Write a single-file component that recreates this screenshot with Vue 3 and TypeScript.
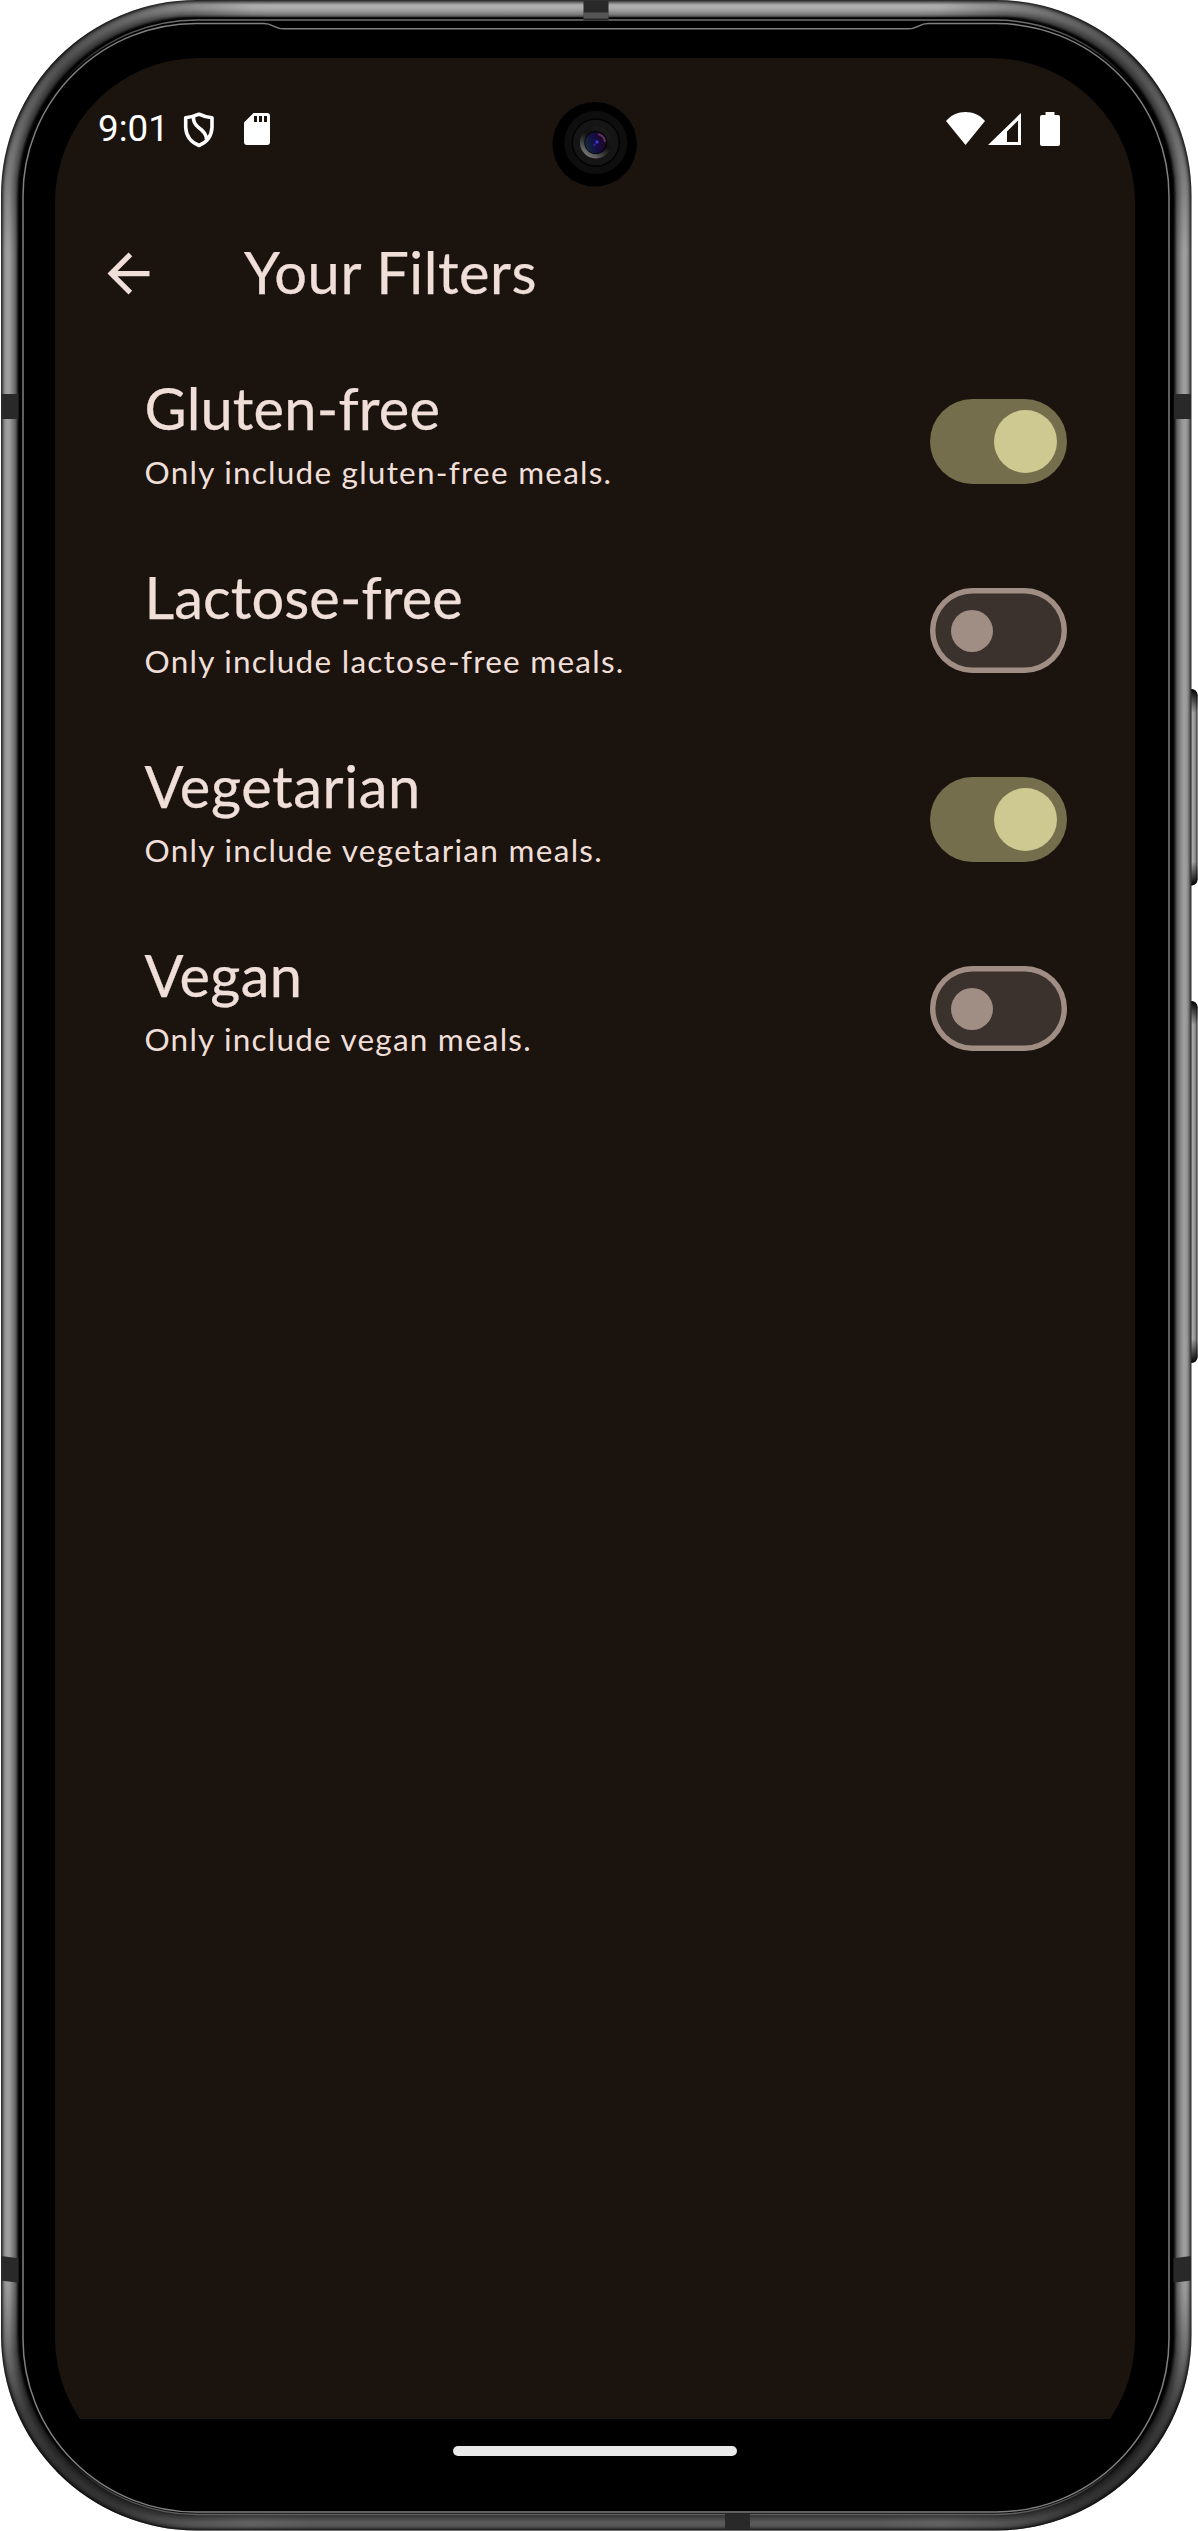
<script setup lang="ts">
import { ref } from 'vue'

interface Filter {
  title: string
  subtitle: string
  on: boolean
  titleTracking: number
  subtitleTracking: number
}

const filters = ref<Filter[]>([
  { title: 'Gluten-free', subtitle: 'Only include gluten-free meals.', on: true, titleTracking: 0.2, subtitleTracking: 1.24 },
  { title: 'Lactose-free', subtitle: 'Only include lactose-free meals.', on: false, titleTracking: 0.1, subtitleTracking: 1.25 },
  { title: 'Vegetarian', subtitle: 'Only include vegetarian meals.', on: true, titleTracking: 0.6, subtitleTracking: 1.31 },
  { title: 'Vegan', subtitle: 'Only include vegan meals.', on: false, titleTracking: 0.3, subtitleTracking: 1.21 },
])

// Brightness of the metal rim, one value per pixel from the outer edge inwards.
const rim: number[] = [48, 76, 110, 134, 148, 156, 158, 158, 154, 148, 138, 128, 118, 108, 94, 72, 40, 14, 0]
const rings = rim.map((v, i) => ({
  x: 1 + i,
  y: i,
  w: 1190.5 - 2 * i,
  h: 2530.5 - 2 * i,
  r: 195.5 - i,
  color: `rgb(${v},${v},${v})`,
}))
</script>

<template>
  <div class="phone">
    <svg class="frame" width="1198" height="2531" viewBox="0 0 1198 2531" aria-hidden="true">
      <defs>
        <linearGradient id="btn" x1="0" x2="1" y1="0" y2="0">
          <stop offset="0" stop-color="#777" />
          <stop offset="0.6" stop-color="#aaa" />
          <stop offset="0.85" stop-color="#888" />
          <stop offset="1" stop-color="#151515" />
        </linearGradient>
        <linearGradient id="ends" x1="0" x2="0" y1="0" y2="1">
          <stop offset="0" stop-color="#000" />
          <stop offset="1" stop-color="#000" stop-opacity="0" />
        </linearGradient>
        <linearGradient id="endsUp" x1="0" x2="0" y1="1" y2="0">
          <stop offset="0" stop-color="#000" />
          <stop offset="1" stop-color="#000" stop-opacity="0" />
        </linearGradient>
        <radialGradient id="shade">
          <stop offset="0" stop-color="#000" stop-opacity="0.5" />
          <stop offset="0.3" stop-color="#000" stop-opacity="0.4" />
          <stop offset="0.65" stop-color="#000" stop-opacity="0.2" />
          <stop offset="1" stop-color="#000" stop-opacity="0" />
        </radialGradient>
        <radialGradient id="shadeLow">
          <stop offset="0" stop-color="#000" stop-opacity="0.62" />
          <stop offset="0.35" stop-color="#000" stop-opacity="0.55" />
          <stop offset="0.7" stop-color="#000" stop-opacity="0.22" />
          <stop offset="1" stop-color="#000" stop-opacity="0" />
        </radialGradient>
        <linearGradient id="low" x1="0" x2="0" y1="0" y2="1">
          <stop offset="0" stop-color="#000" stop-opacity="0" />
          <stop offset="1" stop-color="#000" stop-opacity="0.3" />
        </linearGradient>
        <linearGradient id="glow" x1="0" x2="1" y1="0" y2="0">
          <stop offset="0" stop-color="#fff" stop-opacity="0" />
          <stop offset="0.15" stop-color="#fff" stop-opacity="0.16" />
          <stop offset="0.85" stop-color="#fff" stop-opacity="0.16" />
          <stop offset="1" stop-color="#fff" stop-opacity="0" />
        </linearGradient>
        <linearGradient id="dim" x1="0" x2="1" y1="0" y2="0">
          <stop offset="0" stop-color="#000" stop-opacity="0" />
          <stop offset="0.2" stop-color="#000" stop-opacity="0.2" />
          <stop offset="0.8" stop-color="#000" stop-opacity="0.2" />
          <stop offset="1" stop-color="#000" stop-opacity="0" />
        </linearGradient>
        <linearGradient id="seam" gradientUnits="userSpaceOnUse" x1="0" x2="0" y1="20" y2="2514">
          <stop offset="0" stop-color="#727272" />
          <stop offset="0.025" stop-color="#727272" stop-opacity="0" />
          <stop offset="0.975" stop-color="#606060" stop-opacity="0" />
          <stop offset="1" stop-color="#606060" />
        </linearGradient>
        <clipPath id="body"><rect x="1" y="0" width="1190.5" height="2530.5" rx="195.5" /></clipPath>
      </defs>
      <g>
        <rect x="1185" y="689" width="12.5" height="196.5" rx="6" fill="url(#btn)" />
        <rect x="1185" y="689" width="12.5" height="24" rx="6" fill="url(#ends)" />
        <rect x="1185" y="861.5" width="12.5" height="24" rx="6" fill="url(#endsUp)" />
        <rect x="1185" y="1001" width="12.5" height="362" rx="6" fill="url(#btn)" />
        <rect x="1185" y="1001" width="12.5" height="24" rx="6" fill="url(#ends)" />
        <rect x="1185" y="1339" width="12.5" height="24" rx="6" fill="url(#endsUp)" />
      </g>
      <rect
        v-for="(g, i) in rings"
        :key="i"
        :x="g.x"
        :y="g.y"
        :width="g.w"
        :height="g.h"
        :rx="g.r"
        :fill="g.color"
      />
      <g clip-path="url(#body)">
        <rect x="130" y="4" width="932" height="13" fill="url(#glow)" />
        <circle cx="58" cy="58" r="200" fill="url(#shade)" />
        <circle cx="1134" cy="58" r="200" fill="url(#shade)" />
        <circle cx="58" cy="2472" r="200" fill="url(#shadeLow)" />
        <circle cx="1134" cy="2472" r="200" fill="url(#shadeLow)" />
        <rect x="0" y="2300" width="1198" height="231" fill="url(#low)" />
        <rect x="130" y="2512" width="932" height="19" fill="url(#dim)" />
      </g>
      <rect x="21" y="20" width="1150" height="2494.5" rx="176" fill="none" stroke="url(#seam)" stroke-width="1.4" />
      <path
        d="M23 196A173 172.500 0 0 1 196 23.500H264C273 23.500 274 28.800 284 28.800H908C918 28.800 919 23.500 928 23.500H996A173 172.500 0 0 1 1169 196V2339A173 173 0 0 1 996 2512H196A173 173 0 0 1 23 2339Z"
        fill="#000"
        stroke="#808080"
        stroke-width="1.5"
      />
      <g fill="#292929">
        <path d="M583.5 1h25v19.500h-25z" />
        <path d="M1 394h17.500v25H1z" />
        <path d="M1174 394h17v25h-17z" />
        <path d="M1 2256l17.500 2.300v24.500L1 2280.500z" />
        <path d="M1191 2256l-17.500 2.300v24.500l17.500-2.300z" />
        <path d="M725 2514h25v15h-25z" />
      </g>
      <path d="M583.5 12.500h25v6h-25z" fill="#686868" opacity="0.7" />
    </svg>

    <main class="screen">
      <header class="status">
        <div class="left">
          <span class="time">9:01</span>
          <svg class="shield" width="32" height="36" viewBox="0 0 32 36">
            <g fill="none" stroke="#fff" stroke-width="3.6" stroke-linejoin="round">
              <path d="M16 2.200C11.500 4.300 7 5.300 2.700 5.700V15.500C3.200 24 8.500 30.500 16 33.500C23.500 30.500 28.500 24 29 15.500V5.700C24.500 5.300 20 4.300 16 2.200Z" />
              <path d="M10.500 4.500C10 9 12 12.500 15.500 15.500C20 18.500 23.500 21.500 23.500 27.500" />
            </g>
          </svg>
          <svg class="sd" width="26" height="32" viewBox="0 0 26 32">
            <path fill="#fff" fill-rule="evenodd" d="M9.500 0H23a3 3 0 0 1 3 3V29a3 3 0 0 1-3 3H3a3 3 0 0 1-3-3V9.500ZM10 3V9h3V3ZM15 3V9h3V3ZM20 3V9h3V3Z" />
          </svg>
        </div>
        <div class="right">
          <svg width="39" height="33" viewBox="0 0 39 33"><path fill="#fff" d="M0 9C5 3 12 0 19.500 0S34 3 39 9L19.500 33Z" /></svg>
          <svg class="signal" width="33" height="32" viewBox="0 0 33 32">
            <path fill="#fff" fill-rule="evenodd" d="M33 0V32H0ZM30 7.500L19 18.500V29H30Z" />
          </svg>
          <svg class="battery" width="20" height="34" viewBox="0 0 20 34">
            <path fill="#fff" d="M5.500 0h9v3H18a2 2 0 0 1 2 2V32a2 2 0 0 1-2 2H2a2 2 0 0 1-2-2V5a2 2 0 0 1 2-2H5.500Z" />
          </svg>
        </div>
      </header>

      <nav class="appbar">
        <svg class="back" width="63" height="63" viewBox="0 0 24 24">
          <path fill="#f0dfd8" d="M20 11H7.830l5.590-5.590L12 4l-8 8 8 8 1.410-1.410L7.830 13H20v-2z" />
        </svg>
        <h1>Your Filters</h1>
      </nav>

      <section class="list">
        <div v-for="f in filters" :key="f.title" class="row" @click="f.on = !f.on">
          <div class="text">
            <h2 :style="{ letterSpacing: f.titleTracking + 'px' }">{{ f.title }}</h2>
            <p :style="{ letterSpacing: f.subtitleTracking + 'px' }">{{ f.subtitle }}</p>
          </div>
          <div class="switch" :class="{ on: f.on }"><i class="thumb"></i></div>
        </div>
      </section>
    </main>
    <div class="home"></div>

    <svg class="camera" width="86" height="86" viewBox="0 0 86 86" aria-hidden="true">
      <defs>
        <linearGradient id="bezel" x1="0.200" y1="0.900" x2="0.750" y2="0.100">
          <stop offset="0" stop-color="#777" />
          <stop offset="0.350" stop-color="#333" />
          <stop offset="0.600" stop-color="#111" />
          <stop offset="1" stop-color="#1b1b1b" />
        </linearGradient>
        <linearGradient id="lens" x1="0" y1="0.600" x2="1" y2="0.300">
          <stop offset="0" stop-color="#162c3a" />
          <stop offset="0.450" stop-color="#120f48" />
          <stop offset="0.750" stop-color="#1c0830" />
          <stop offset="1" stop-color="#1a0619" />
        </linearGradient>
      </defs>
      <circle cx="42.700" cy="43.300" r="42.200" fill="#000" />
      <circle cx="43.800" cy="41.600" r="31.500" fill="#0e0e0e" />
      <circle cx="43.800" cy="41.600" r="23.500" fill="#151515" stroke="#020202" stroke-width="1.500" />
      <circle cx="43.800" cy="41.600" r="15.800" fill="url(#bezel)" />
      <circle cx="43.800" cy="41.600" r="11.500" fill="#050505" />
      <circle cx="43.500" cy="41.800" r="10.500" fill="url(#lens)" />
      <path d="M47 33.500Q52 35 53 40" fill="none" stroke="#8a4e8e" stroke-width="2.200" stroke-linecap="round" opacity="0.6" />
      <circle cx="45" cy="41" r="1.700" fill="#3f35d8" />
      <circle cx="42.500" cy="44" r="1.200" fill="#2b2799" />
    </svg>
  </div>
</template>

<style>
body {
  background: #fff;
}
</style>

<style scoped>
.phone {
  position: relative;
  box-sizing: border-box;
  width: 1198px;
  height: 2531px;
  padding: 58px 63px 0 55px;
  overflow: hidden;
  font-family: Lato, sans-serif;
  color: #f0dfd8;
}
.frame {
  position: absolute;
  left: 0;
  top: 0;
}
.camera {
  position: absolute;
  left: 552px;
  top: 101px;
}
.screen {
  position: relative;
  width: 1080px;
  height: 2361px;
  background: #1b130e;
  clip-path: inset(0 0 -63px 0 round 144px);
}
.status {
  display: flex;
  justify-content: space-between;
  box-sizing: border-box;
  height: 142px;
  padding: 49px 75px 0 43px;
}
.left,
.right {
  display: flex;
  align-items: flex-start;
  height: 44px;
}
.time {
  width: 67px;
  font-family: Roboto, sans-serif;
  font-size: 36.75px;
  line-height: 43px;
  color: #fff;
  white-space: nowrap;
}
.shield {
  margin: 5px 0 0 18px;
}
.sd {
  margin: 6px 0 0 29px;
}
.right {
  padding-top: 5px;
}
.signal {
  margin: 1px 0 0 3px;
}
.battery {
  margin-left: 19px;
}
.appbar {
  display: flex;
  align-items: center;
  height: 147px;
  padding-left: 42.4px;
}
h1,
h2,
p {
  margin: 0;
  font-weight: 400;
  white-space: nowrap;
}
h1,
h2 {
  font-size: 57.75px;
  line-height: 73.5px;
  -webkit-text-stroke: 0.25px #f0dfd8;
}
h1 {
  margin-left: 83.6px;
  padding-bottom: 3px;
  letter-spacing: 0.58px;
}
.row {
  display: flex;
  justify-content: space-between;
  align-items: center;
  height: 189px;
  padding: 0 68px 0 89.5px;
}
.text {
  padding-bottom: 19px;
}
p {
  margin-top: 6.2px;
  font-size: 31.5px;
  line-height: 42px;
}
.switch {
  display: flex;
  align-items: center;
  box-sizing: border-box;
  width: 136.8px;
  height: 84.5px;
  padding-left: 21px;
  box-shadow: inset 0 0 0 5.4px #a08d84;
  border-radius: 43px;
  background: #3b322d;
}
.thumb {
  width: 42px;
  height: 42px;
  border-radius: 50%;
  background: #a08d84;
}
.switch.on {
  justify-content: flex-end;
  padding: 0 10.4px 0 0;
  box-shadow: none;
  background: #756e4c;
}
.switch.on .thumb {
  width: 63px;
  height: 63px;
  background: #cec991;
}
.home {
  position: relative;
  width: 284px;
  height: 10px;
  margin: 27px 0 0 398px;
  border-radius: 5px;
  background: #e9e9e9;
}
</style>
